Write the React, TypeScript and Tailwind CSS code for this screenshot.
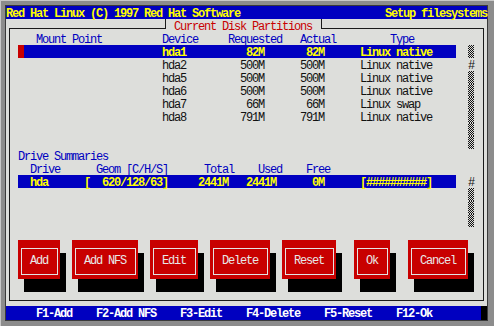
import React from "react";

type Part = { dev: string; req: string; act: string; type: string };

const partitions: Part[] = [
  { dev: "hda1", req: "82M", act: "82M", type: "Linux native" },
  { dev: "hda2", req: "500M", act: "500M", type: "Linux native" },
  { dev: "hda5", req: "500M", act: "500M", type: "Linux native" },
  { dev: "hda6", req: "500M", act: "500M", type: "Linux native" },
  { dev: "hda7", req: "66M", act: "66M", type: "Linux swap" },
  { dev: "hda8", req: "791M", act: "791M", type: "Linux native" },
];

const buttons = [
  { label: "Add", w: "w-[42px]", ml: "" },
  { label: "Add NFS", w: "w-[66px]", ml: "ml-[12px]" },
  { label: "Edit", w: "w-[48px]", ml: "ml-[12px]" },
  { label: "Delete", w: "w-[60px]", ml: "ml-[12px]" },
  { label: "Reset", w: "w-[54px]", ml: "ml-[12px]" },
  { label: "Ok", w: "w-[36px]", ml: "ml-[18px]" },
  { label: "Cancel", w: "w-[60px]", ml: "ml-[18px]" },
];

// put text on the character grid: [column, text]
const line = (cells: [number, string][]) =>
  cells.reduce((s, [col, t]) => s.padEnd(col, " ") + t, "");
const endAt = (col: number, t: string): [number, string] => [col - t.length + 1, t];

const Shade = () => (
  <div className="h-[13px] w-[6px] bg-[conic-gradient(#111_90deg,transparent_90deg_180deg,#111_180deg_270deg,transparent_270deg)] bg-[length:2px_2px]" />
);

const Thumb = () => (
  <div className="h-[13px] w-[6px] leading-[17px] text-[#111]">#</div>
);

const PartRow = ({ p, sel }: { p: Part; sel: boolean }) => (
  <div className="flex h-[13px]">
    <div className="w-[6px]" />
    <div className={sel ? "w-[6px] bg-[#c80000]" : "w-[6px]"} />
    <div
      className={
        sel
          ? "w-[432px] whitespace-pre leading-[17px] bg-[#0000c0] text-[#ffff00] font-bold"
          : "w-[432px] whitespace-pre leading-[17px] text-[#111]"
      }
    >
      {line([[23, p.dev], endAt(39, p.req), endAt(49, p.act), [56, p.type]])}
    </div>
  </div>
);

const Button = ({ label, w, ml }: { label: string; w: string; ml: string }) => (
  <div className={`${w} ${ml} h-[39px] bg-[#c80000] shadow-[6px_13px_0_0_#000] pt-[8px] pl-[3px] pr-[2px] pb-[4px]`}>
    <div className="h-full border border-[#e4e4e4] pt-[4px] pl-[8px] text-[#e8e8e8] whitespace-pre leading-[17px]">
      {label}
    </div>
  </div>
);

const Window = () => (
  <div className="relative ml-[3px] mt-[9px] w-[475px] h-[273px] border border-[#1a1a1a] pl-[2px] pt-[3px]">
    <div className="absolute left-[155px] -top-[10px] w-[157px] h-[10px] border-x border-[#1a1a1a] bg-[#dddedb] pl-[8px] pt-[3px] text-[#c80000] whitespace-pre leading-[10px]">
      Current Disk Partitions
    </div>

    <div className="h-[13px] whitespace-pre leading-[17px] text-[#0000c0]">
      {line([[4, "Mount Point"], [25, "Device"], [36, "Requested"], [48, "Actual"], [63, "Type"]])}
    </div>

    <div className="flex">
      <div className="w-[444px] h-[104px]">
        {partitions.map((p, i) => (
          <PartRow key={p.dev} p={p} sel={i === 0} />
        ))}
      </div>
      <div className="ml-[12px] flex flex-col">
        <Shade />
        <Thumb />
        <Shade />
        <Shade />
        <Shade />
        <Shade />
        <Shade />
        <Shade />
      </div>
    </div>

    <div className="h-[13px] pl-[6px] whitespace-pre leading-[17px] text-[#0000c0]">Drive Summaries</div>
    <div className="h-[13px] whitespace-pre leading-[17px] text-[#0000c0]">
      {line([[3, "Drive"], [14, "Geom [C/H/S]"], [32, "Total"], [41, "Used"], [49, "Free"]])}
    </div>

    <div className="flex">
      <div className="w-[444px] h-[52px] pl-[6px]">
        <div className="w-[438px] h-[13px] bg-[#0000c0] text-[#ffff00] font-bold whitespace-pre leading-[17px]">
          {line([[2, "hda"], [11, "["], [14, "620/128/63]"], [30, "2441M"], [38, "2441M"], [49, "0M"], [57, "[##########]"]])}
        </div>
      </div>
      <div className="ml-[12px] flex flex-col">
        <Thumb />
        <Shade />
        <Shade />
        <Shade />
      </div>
    </div>

    <div className="h-[13px]" />

    <div className="flex pl-[6px]">
      {buttons.map((b) => (
        <Button key={b.label} {...b} />
      ))}
    </div>
  </div>
);

export default function App() {
  return (
    <div className="w-[494px] h-[326px] bg-[#8c8c8c] border-t border-l border-[#c8c8c8] pl-[4px] pt-[4px] font-[family-name:Liberation_Mono,monospace] text-[12px] tracking-[-1.2px]">
      <div className="w-[483px] h-[316px] border border-[#3a3a3a] bg-[#dddedb] flex flex-col">
        <div className="h-[13px] bg-[#0000c0] flex justify-between text-[#ffff00] font-bold whitespace-pre leading-[17px]">
          <span>Red Hat Linux (C) 1997 Red Hat Software</span>
          <span>Setup filesystems</span>
        </div>
        <div className="flex-1">
          <Window />
        </div>
        <div className="h-[14px] flex">
          <div className="flex-1 bg-[#0000c0] text-white font-bold whitespace-pre leading-[17px]">
            {"     F1-Add    F2-Add NFS    F3-Edit    F4-Delete    F5-Reset    F12-Ok"}
          </div>
          <div className="w-[6px] bg-black" />
        </div>
      </div>
    </div>
  );
}
